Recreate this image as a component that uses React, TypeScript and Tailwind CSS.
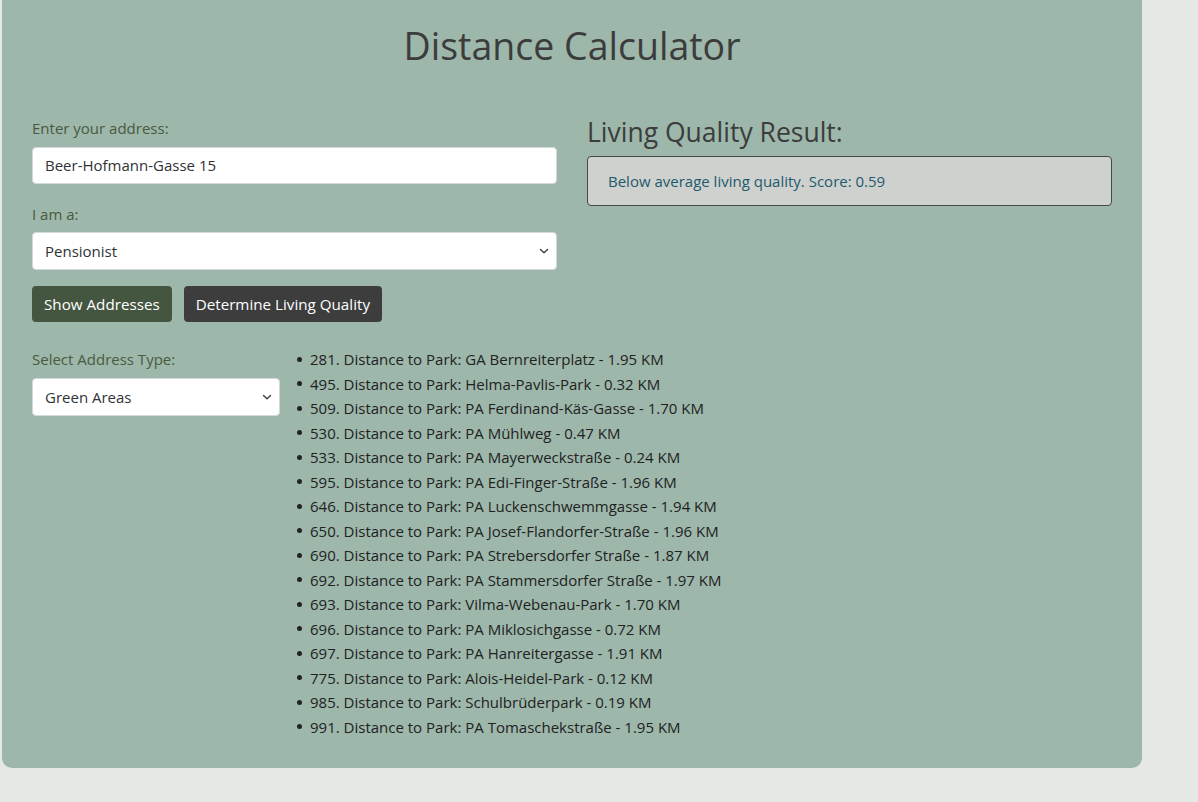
import React from "react";

const items = [
  "281. Distance to Park: GA Bernreiterplatz - 1.95 KM",
  "495. Distance to Park: Helma-Pavlis-Park - 0.32 KM",
  "509. Distance to Park: PA Ferdinand-Käs-Gasse - 1.70 KM",
  "530. Distance to Park: PA Mühlweg - 0.47 KM",
  "533. Distance to Park: PA Mayerweckstraße - 0.24 KM",
  "595. Distance to Park: PA Edi-Finger-Straße - 1.96 KM",
  "646. Distance to Park: PA Luckenschwemmgasse - 1.94 KM",
  "650. Distance to Park: PA Josef-Flandorfer-Straße - 1.96 KM",
  "690. Distance to Park: PA Strebersdorfer Straße - 1.87 KM",
  "692. Distance to Park: PA Stammersdorfer Straße - 1.97 KM",
  "693. Distance to Park: Vilma-Webenau-Park - 1.70 KM",
  "696. Distance to Park: PA Miklosichgasse - 0.72 KM",
  "697. Distance to Park: PA Hanreitergasse - 1.91 KM",
  "775. Distance to Park: Alois-Heidel-Park - 0.12 KM",
  "985. Distance to Park: Schulbrüderpark - 0.19 KM",
  "991. Distance to Park: PA Tomaschekstraße - 1.95 KM",
];

function Chevron() {
  return (
    <svg
      className="pointer-events-none absolute right-[7px] top-1/2 -translate-y-1/2"
      width="10"
      height="8"
      viewBox="0 0 10 8"
      fill="none"
    >
      <path d="M1.5 2.5 L5 5.8 L8.5 2.5" stroke="#3a3f44" strokeWidth="1.4" strokeLinecap="round" strokeLinejoin="round" />
    </svg>
  );
}

function SelectBox({ value }: { value: string }) {
  return (
    <div className="relative h-[38px] w-full rounded-[4px] border border-[#d4d8dc] bg-white">
      <div className="flex h-full items-center pl-[12px] text-[15px] text-[#2f3337]">{value}</div>
      <Chevron />
    </div>
  );
}

export default function App() {
  return (
    <div
      className="min-h-screen bg-[#e6e8e5] pl-[2px]"
      style={{ fontFamily: '"Open Sans", "Noto Sans", sans-serif' }}
    >
      <div className="w-[1140px] rounded-b-[10px] bg-[#9db7ab] px-[30px] pb-[29px]">
        <h1 className="pt-[22px] text-center text-[37.5px] leading-[48px] text-[#3c3c3c]">
          Distance Calculator
        </h1>

        <div className="mt-[48px] flex gap-[30px]">
          <div className="flex w-[525px] flex-col">
            <label className="text-[15px] leading-[20px] text-[#4a5a40]">Enter your address:</label>
            <div className="mt-[9px] flex h-[37px] items-center rounded-[4px] border border-[#d4d8dc] bg-white pl-[12px] text-[15px] text-[#2f3337]">
              Beer-Hofmann-Gasse 15
            </div>
            <label className="mt-[20px] text-[15px] leading-[20px] text-[#4a5a40]">I am a:</label>
            <div className="mt-[8px]">
              <SelectBox value="Pensionist" />
            </div>
            <div className="mt-[16px] flex gap-[12px]">
              <button className="h-[36px] rounded-[4px] bg-[#445640] px-[12px] text-[15.2px] text-white">
                Show Addresses
              </button>
              <button className="h-[36px] rounded-[4px] bg-[#3d3d3d] px-[12px] text-[15.2px] text-white">
                Determine Living Quality
              </button>
            </div>
          </div>

          <div className="flex w-[525px] flex-col">
            <h3 className="-mt-[2px] text-[26.5px] leading-[33px] text-[#3c3c3c]">Living Quality Result:</h3>
            <div className="mt-[7px] flex h-[50px] items-center rounded-[4px] border border-[#474747] bg-[#cfd1ce] pl-[20px] text-[15px] text-[#1e5a6b]">
              Below average living quality. Score: 0.59
            </div>
          </div>
        </div>

        <div className="mt-[25px] flex">
          <div className="w-[248px] pt-[2px]">
            <label className="block text-[15px] leading-[20px] text-[#4a5a40]">Select Address Type:</label>
            <div className="mt-[9px]">
              <SelectBox value="Green Areas" />
            </div>
          </div>
          <ul className="pl-[17px] text-[15px] leading-[24.5px] text-[#222]">
            {items.map((t) => (
              <li key={t} className="flex items-center">
                <span className="mr-[8px] h-[5px] w-[5px] shrink-0 rounded-full bg-[#222]" />
                <span>{t}</span>
              </li>
            ))}
          </ul>
        </div>
      </div>
    </div>
  );
}
